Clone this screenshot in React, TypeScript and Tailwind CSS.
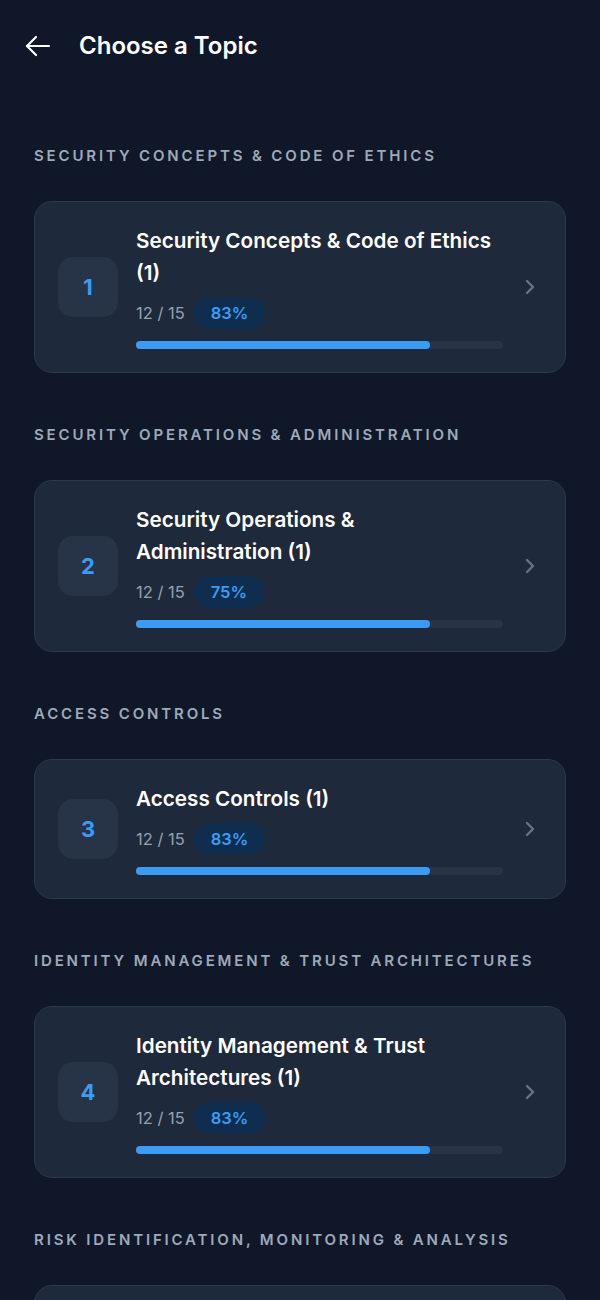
import { ChevronRight } from "lucide-react";

interface Topic {
  id: number;
  section: string;
  title: string;
  done: number;
  total: number;
  pct: string;
}

const topics: Topic[] = [
  { id: 1, section: "Security Concepts & Code of Ethics", title: "Security Concepts & Code of Ethics (1)", done: 12, total: 15, pct: "83%" },
  { id: 2, section: "Security Operations & Administration", title: "Security Operations & Administration (1)", done: 12, total: 15, pct: "75%" },
  { id: 3, section: "Access Controls", title: "Access Controls (1)", done: 12, total: 15, pct: "83%" },
  { id: 4, section: "Identity Management & Trust Architectures", title: "Identity Management & Trust Architectures (1)", done: 12, total: 15, pct: "83%" },
  { id: 5, section: "Risk Identification, Monitoring & Analysis", title: "Risk Identification, Monitoring & Analysis (1)", done: 12, total: 15, pct: "83%" },
];

function TopicCard({ topic }: { topic: Topic }) {
  const width = (topic.done / topic.total) * 100;
  return (
    <div className="flex items-center rounded-[18px] border border-[#2c384b] bg-[#1e293b] p-[23px]">
      <div className="flex h-[60px] w-[60px] shrink-0 items-center justify-center rounded-[15px] bg-[#273346] text-[22px] font-bold text-[#3b9cf6]">
        {topic.id}
      </div>
      <div className="ml-[18px] flex min-w-0 flex-1 flex-col">
        <div className="text-[20.7px] font-semibold leading-[32px] text-white">{topic.title}</div>
        <div className="mt-2 flex items-center gap-[9px]">
          <span className="text-[16.5px] text-[#97a1b0]">
            {topic.done} / {topic.total}
          </span>
          <span className="flex h-8 items-center rounded-full bg-[#0f2e4f] px-[17px] text-[16.5px] font-semibold text-[#3b9cf6]">
            {topic.pct}
          </span>
        </div>
        <div className="mt-3 h-2 w-full rounded-full bg-[#273346]">
          <div className="h-2 rounded-full bg-[#3b9cf6]" style={{ width: `${width}%` }} />
        </div>
      </div>
      <div className="ml-[15px] flex w-6 shrink-0 justify-center text-[#64748b]">
        <ChevronRight size={26} strokeWidth={2.4} />
      </div>
    </div>
  );
}

export default function App() {
  return (
    <main
      className="min-h-screen bg-[#0f1729] px-[34px] pb-10 pt-[30px]"
      style={{ fontFamily: "Inter, 'Noto Sans', sans-serif" }}
    >
      <header className="-ml-[9px] flex h-8 items-center">
        <svg width="26" height="22" viewBox="0 0 26 22" fill="none" stroke="white" strokeWidth="2.2" strokeLinecap="round" strokeLinejoin="round">
          <path d="M2 11h22" />
          <path d="M11 2 2 11l9 9" />
        </svg>
        <h1 className="ml-[28px] text-[24px] font-semibold leading-8 text-white">Choose a Topic</h1>
      </header>

      <div className="mt-[84px] flex flex-col gap-[52px]">
        {topics.map((t) => (
          <section key={t.id}>
            <h2 className="mb-[35px] text-[15px] font-semibold uppercase leading-5 tracking-[2.85px] text-[#9eaaba]">
              {t.section}
            </h2>
            <TopicCard topic={t} />
          </section>
        ))}
      </div>
    </main>
  );
}
